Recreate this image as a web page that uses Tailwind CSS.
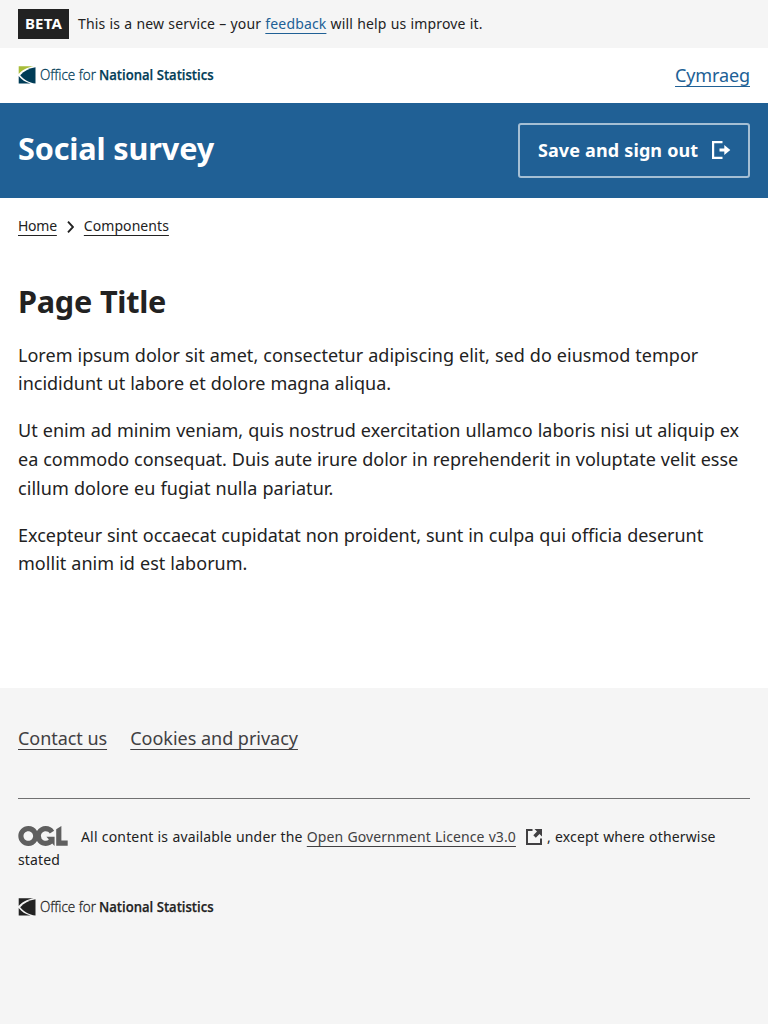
<!DOCTYPE html>
<html lang="en">
<head>
<meta charset="utf-8">
<title>Social survey</title>
<script src="https://cdn.jsdelivr.net/npm/@tailwindcss/browser@4"></script>
</head>
<body class="bg-white font-['Noto_Sans',sans-serif] text-[18px] leading-[28.8px] text-[#222222] min-h-screen flex flex-col">
<svg class="hidden">
  <symbol id="ons" viewBox="0 0 196 18">
    <path class="fill-(--corner)" d="M.7.3H15.500C9 1.500 3.500 4.500.7 8Z"/>
    <path d="M17.500 1.300V17.600C11 16.800 5.500 13.500 2.200 9.300C6 5 11.500 2.200 17.500 1.300Z"/>
    <path d="M.7 10C3.500 13.600 7.500 16.300 12.500 17.600H.7Z"/>
    <text x="22" y="14.200" font-family="Open Sans" font-size="15" font-weight="300" stroke="currentColor" stroke-width=".3" textLength="56" lengthAdjust="spacingAndGlyphs">Office for</text>
    <text x="81" y="14.200" font-family="Open Sans" font-size="15" font-weight="600" stroke="currentColor" stroke-width=".25" textLength="114.600" lengthAdjust="spacingAndGlyphs">National Statistics</text>
  </symbol>
</svg>
<div class="h-12 bg-[#f5f5f5] px-[18px] flex items-center text-[14px] leading-[22.4px]">
  <strong class="bg-[#222222] text-white font-bold text-[15px] tracking-[.2px] h-[30px] w-[51px] pb-[2px] flex items-center justify-center mr-[9px]">BETA</strong>
  <p class="tracking-[.15px] [word-spacing:.36px]">This is a new service – your <a class="text-[#206095] underline decoration-1 underline-offset-4 [text-decoration-skip-ink:none]" href="#">feedback</a> will help us improve it.</p>
</div>
<header>
  <div class="h-[55px] px-[18px] flex items-center justify-between">
    <svg class="w-[196px] h-[18px] -mt-[1px] text-[#003c57] [--corner:#a8bd3a]" fill="currentColor"><use href="#ons"/></svg>
    <a class="text-[#206095] tracking-[-.12px] underline decoration-1 underline-offset-4 [text-decoration-skip-ink:none]" href="#">Cymraeg</a>
  </div>
  <div class="h-[95px] px-[18px] bg-[#206095] text-white flex items-center justify-between">
    <div class="text-[30.600px] tracking-[-.14px] font-bold leading-[40px] -mt-[5px]">Social survey</div>
    <button class="h-[55px] w-[232px] border-2 border-white/60 rounded-[3px] flex items-center pl-[18px] font-bold tracking-[.08px] [word-spacing:.32px]">Save and sign out
      <svg class="w-[19px] h-[18px] ml-[13.700px] -mt-[1px]" viewBox="0 0 19 18" fill="currentColor"><path d="M0 0H10.500V2.200H2.200V15.800H10.500V18H0Z"/><path d="M7.500 7.500H12.300V4L18.300 9L12.300 14V10.500H7.500Z"/></svg>
    </button>
  </div>
</header>
<nav class="px-[18px] pt-[17px] flex text-[14px] leading-[22.4px]">
  <a class="tracking-[-.25px] underline decoration-1 underline-offset-4 [text-decoration-skip-ink:none]" href="#">Home</a>
  <svg class="w-[7px] h-[12px] ml-[10px] mr-[10px] mt-[6px]" viewBox="0 0 7 12" fill="none" stroke="currentColor" stroke-width="1.900"><path d="M1 .7L6 6L1 11.300"/></svg>
  <a class="tracking-[.06px] underline decoration-1 underline-offset-4 [text-decoration-skip-ink:none]" href="#">Components</a>
</nav>
<main class="px-[18px] pt-[44px] h-[450.600px] [word-spacing:.3px]">
  <h1 class="text-[30.600px] tracking-[-.25px] font-bold leading-[40px] mb-[19.200px]">Page Title</h1>
  <p class="mb-[18px]"><span class="tracking-[.02px]">Lorem ipsum dolor sit amet, consectetur adipiscing elit, sed do eiusmod tempor</span> incididunt ut labore et dolore magna aliqua.</p>
  <p class="mb-[18px]"><span class="tracking-[.035px]">Ut enim ad minim veniam, quis nostrud exercitation ullamco laboris nisi ut aliquip ex</span> <span class="tracking-[-.02px]">ea commodo consequat. Duis aute irure dolor in reprehenderit in voluptate velit esse</span> <span class="tracking-[.06px]">cillum dolore eu fugiat nulla pariatur.</span></p>
  <p><span class="tracking-[-.02px]">Excepteur sint occaecat cupidatat non proident, sunt in culpa qui officia deserunt</span> <span class="tracking-[.03px]">mollit anim id est laborum.</span></p>
</main>
<footer class="bg-[#f5f5f5] grow px-[18px] pt-9">
  <div class="flex gap-[23.200px] text-[#414042]">
    <a class="tracking-[-.05px] underline decoration-1 underline-offset-4 [text-decoration-skip-ink:none]" href="#">Contact us</a>
    <a class="tracking-[-.02px] underline decoration-1 underline-offset-4 [text-decoration-skip-ink:none]" href="#">Cookies and privacy</a>
  </div>
  <hr class="border-0 h-px bg-[#707071] mt-[45px] mb-[27.400px]">
  <p class="text-[14px] leading-[22.6px] tracking-[.16px] [word-spacing:.36px]"><svg class="inline-block align-middle w-[50px] h-5 mr-[13px] relative -top-[2.200px] text-[#5f5f5f]" viewBox="0 0 483.2 195.7" fill="currentColor"><path d="M421.5 142.8V.1l-50.7 32.3v161.1h112.4v-50.7zm-122.3-9.6A47.12 47.12 0 0 1 221 97.8c0-26 21.1-47.1 47.1-47.1 16.7 0 31.4 8.7 39.7 21.8l42.7-27.2A97.63 97.63 0 0 0 268.1 0c-36.5 0-68.3 20.1-85.1 49.7A98 98 0 0 0 97.8 0C43.9 0 0 43.9 0 97.8s43.9 97.8 97.8 97.8c36.5 0 68.3-20.1 85.1-49.7a97.76 97.76 0 0 0 149.6 25.4l19.4 22.2h3v-87.8h-80l24.3 27.5zM97.8 145c-26 0-47.1-21.1-47.1-47.1s21.1-47.1 47.1-47.1 47.1 21.1 47.1 47.1S123.8 145 97.8 145"/></svg>All content is available under the <a class="text-[#414042] tracking-[.1px] underline decoration-1 underline-offset-4 [text-decoration-skip-ink:none]" href="#">Open Government Licence v3.0</a><svg class="inline-block align-middle w-4 h-4 ml-[10px] mr-[5px] relative -top-[1.200px] text-[#414042]" viewBox="0 0 16 16" fill="currentColor"><path d="M0 0H6.500V2H2V14H14V9.500H16V16H0Z"/><path d="M8.500 0H16V7.500L13.500 5L9.800 8.700L7.300 6.200L11 2.500Z"/></svg>, except where otherwise stated</p>
  <svg class="w-[196px] h-[18px] mt-[26.400px] text-[#222222] [--corner:#222222]" fill="currentColor"><use href="#ons"/></svg>
</footer>
</body>
</html>
